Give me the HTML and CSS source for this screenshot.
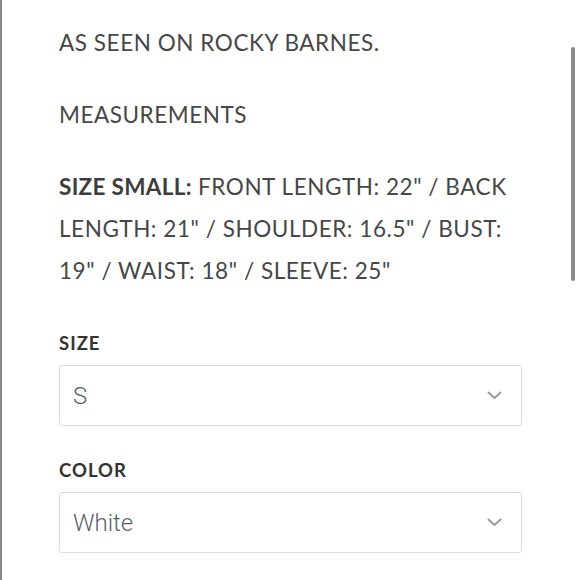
FILE: index.html
```html
<!DOCTYPE html>
<html>
<head>
<meta charset="utf-8">
<link rel="stylesheet" href="styles.css">
</head>
<body>
<div class="page">
  <div class="content">
    <p class="para">AS SEEN ON ROCKY BARNES.</p>
    <p class="para">MEASUREMENTS</p>
    <p class="para"><strong>SIZE SMALL:</strong> FRONT LENGTH: 22" / BACK LENGTH: 21" / SHOULDER: 16.5" / BUST: 19" / WAIST: 18" / SLEEVE: 25"</p>
    <div class="field">
      <div class="label">SIZE</div>
      <div class="select">
        <span class="value">S</span>
        <svg class="chev" width="15" height="9" viewBox="0 0 15 9"><path d="M1.5 1.5 L7.5 7 L13.5 1.5" fill="none" stroke="#9a9a9a" stroke-width="2" stroke-linecap="round" stroke-linejoin="round"/></svg>
      </div>
    </div>
    <div class="field">
      <div class="label">COLOR</div>
      <div class="select">
        <span class="value">White</span>
        <svg class="chev" width="15" height="9" viewBox="0 0 15 9"><path d="M1.5 1.5 L7.5 7 L13.5 1.5" fill="none" stroke="#9a9a9a" stroke-width="2" stroke-linecap="round" stroke-linejoin="round"/></svg>
      </div>
    </div>
  </div>
  <div class="scrollbar"></div>
</div>
</body>
</html>
```
FILE: styles.css
```css
html, body {
  margin: 0;
  padding: 0;
  background: #ffffff;
}
.page {
  position: relative;
  width: 580px;
  height: 580px;
  overflow: hidden;
  box-sizing: border-box;
  border-left: 2px solid #8a8a8a;
}
.content {
  padding: 22px 58px 0 57px;
  font-family: "Lato", "Noto Sans", sans-serif;
  color: #474747;
}
.para {
  margin: 0 0 30px 0;
  font-size: 22.5px;
  line-height: 42px;
  font-weight: 400;
  letter-spacing: 0.55px;
}
.para strong {
  font-weight: 700;
  color: #3d3d3d;
  letter-spacing: 0.3px;
}
.field + .field {
  margin-top: 32px;
}
.para + .field {
  margin-top: 39px;
}
.label {
  font-size: 18.5px;
  line-height: 24px;
  font-weight: 700;
  color: #333333;
  letter-spacing: 1px;
  margin-bottom: 10px;
}
.select {
  height: 61px;
  box-sizing: border-box;
  border: 1px solid #dcdcdc;
  border-radius: 3px;
  display: flex;
  align-items: center;
  justify-content: space-between;
  padding: 0 19px 0 13px;
}
.value {
  font-family: "Roboto", "Liberation Sans", sans-serif;
  font-weight: 300;
  font-size: 24px;
  color: #5b616b;
}
.chev {
  display: block;
}
.scrollbar {
  position: absolute;
  top: 47px;
  left: 569px;
  width: 4px;
  height: 234px;
  border-radius: 2px;
  background: #8c8c8c;
}
```
